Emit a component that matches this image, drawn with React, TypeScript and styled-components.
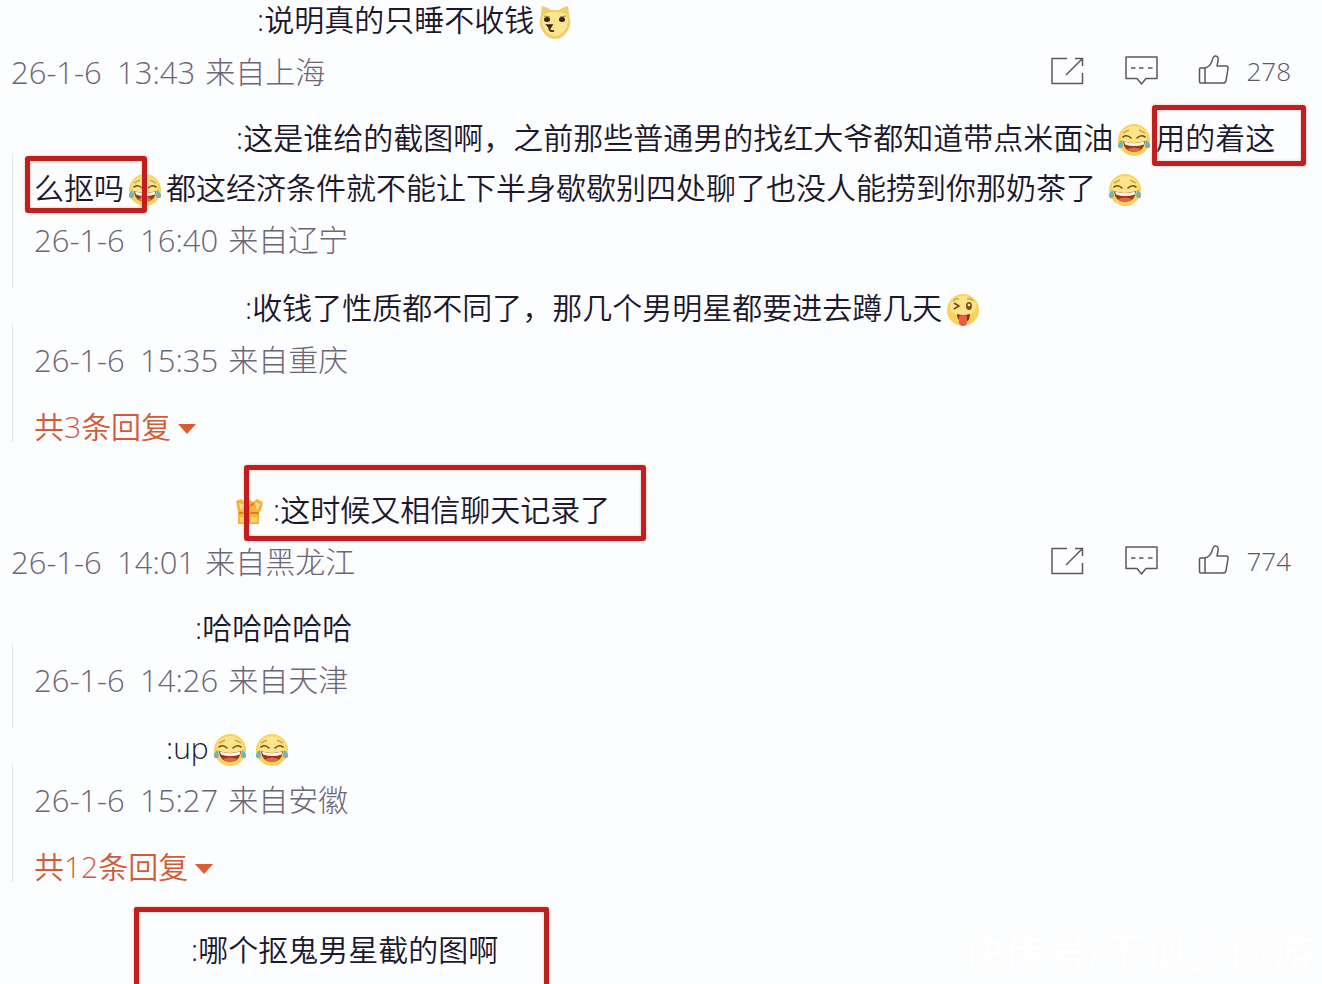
import React from 'react';
import styled, { createGlobalStyle } from 'styled-components';

const GlobalStyle = createGlobalStyle`
  * { box-sizing: border-box; }
  body { margin: 0; background: #fcfdff; }
`;

const Page = styled.main`
  position: relative;
  min-height: 100vh;
  padding-bottom: 14px;
  overflow: hidden;
  background: #fcfdff;
  color: #1c172b;
  font-family: 'Open Sans', 'Noto Sans CJK SC', sans-serif;
  font-size: 30px;
  font-weight: 300;
  line-height: 40px;
`;

const CommentList = styled.div`
  display: flex;
  flex-direction: column;
  gap: 42px;
`;

const Comment = styled.article`
  display: flex;
  flex-direction: column;
`;

const Body = styled.p`
  margin: -5px 0;
  font-weight: 350;
  line-height: 50px;
`;

const HiddenName = styled.span<{ $width: number }>`
  display: inline-block;
  width: ${(p) => p.$width}px;
`;

const Mark = styled.mark<{ $space: string; $open?: boolean }>`
  position: relative;
  display: inline-block;
  background: none;
  color: inherit;
  line-height: 40px;

  &::after {
    content: '';
    position: absolute;
    inset: ${(p) => p.$space};
    border: 5px solid #c01f1d;
    border-bottom-width: ${(p) => (p.$open ? 0 : 5)}px;
    border-radius: ${(p) => (p.$open ? '3px 3px 0 0' : '3px')};
    box-shadow: 0 0 3px #f3b5b2, inset 0 0 3px #f3b5b2;
    pointer-events: none;
  }
`;

const Meta = styled.div`
  display: flex;
  justify-content: space-between;
  align-items: center;
  margin-top: 12px;
  height: 40px;
  color: #6c6575;
`;

const Source = styled.div`
  display: flex;
  gap: 10px;
`;

const TimeText = styled.time`
  font-size: 31px;
`;

const DateText = styled(TimeText)`
  min-width: 96px;
`;

const CommentMeta = styled(Meta)`
  padding: 0 31px 0 11px;
`;

const Actions = styled.div`
  display: flex;
  align-items: center;
  gap: 40px;
  padding-bottom: 2px;
`;

const Action = styled.button`
  display: flex;
  align-items: center;
  gap: 16px;
  padding: 0;
  border: 0;
  background: none;
  color: #5c5566;
  font: inherit;
  font-size: 26px;
  line-height: 34px;
  cursor: pointer;

  svg { display: block; }
`;

const Replies = styled.section`
  margin: 26px 31px 0 12px;
`;

const Reply = styled.article`
  padding: 0 0 28px 22px;
  background: linear-gradient(transparent 36px, #dde3ee 48px) left / 1px 100% no-repeat;
`;

const MoreRow = styled.div`
  height: 40px;
  padding-left: 22px;
  background: linear-gradient(#dde3ee, #dde3ee) left top / 1px 34px no-repeat;
`;

const More = styled.button`
  display: flex;
  align-items: center;
  gap: 7px;
  padding: 0;
  border: 0;
  background: none;
  color: #d35a36;
  font: inherit;
  font-weight: 350;
  line-height: 38px;
  cursor: pointer;
`;

const Caret = styled.span`
  margin-top: 4px;
  border: 9px solid transparent;
  border-top: 10px solid #dc5c30;
  border-bottom: 0;
`;

const Watermark = styled.div`
  position: absolute;
  right: 8px;
  bottom: 0;
  color: #ffffff;
  font-size: 42px;
  font-weight: 400;
  line-height: 62px;
  white-space: nowrap;
`;

const Emoji = styled.svg`
  width: 34px;
  height: 34px;
  margin: 0 4px;
  vertical-align: -8px;
`;

const Face = () => (
  <>
    <circle cx="17" cy="17" r="16" fill="#f7d35d" />
    <ellipse cx="17" cy="13" rx="13" ry="10" fill="#fbe48a" />
  </>
);

const Joy = () => (
  <Emoji viewBox="0 0 34 34" role="img" aria-label="笑cry">
    <Face />
    <path d="M6 10l6-3M28 10l-6-3" stroke="#d9a53a" strokeWidth="1.5" fill="none" />
    <path d="M6 14q4-3 8 1M20 15q4-4 8-1" stroke="#7a4a1c" strokeWidth="1.6" fill="none" strokeLinecap="round" />
    <path d="M6 18q11 4 22 0q-1 11-11 11T6 18z" fill="#9c351c" />
    <path d="M7 18.500q10 3.500 20 0v3q-10 3-19 0z" fill="#fffaf0" />
    <path d="M10 26q7-3 14 0q-3 3-7 3t-7-3z" fill="#de6a43" />
    <path d="M5 17q-5 3-4 7q3 3 5-1z" fill="#6fb3bd" />
    <path d="M29 17q5 3 4 7q-3 3-5-1z" fill="#6fb3bd" />
  </Emoji>
);

const Doge = () => (
  <Emoji viewBox="0 0 34 34" role="img" aria-label="doge">
    <path d="M4 1q5 1 9 4h8q4-3 9-4q1 5 1 10q3 7-1 14q-5 9-13 9T4 25q-4-7-1-14Q3 6 4 1z" fill="#f1cd68" />
    <path d="M6 9q11-5 22 0q4 8 0 14q-4 8-11 8T6 23Q2 16 6 9z" fill="#fae691" />
    <path d="M6 11l6 1M28 11l-6 1" stroke="#a87c35" strokeWidth="1" />
    <ellipse cx="9" cy="14.500" rx="3" ry="2.500" fill="#34201a" />
    <ellipse cx="24" cy="14.500" rx="3" ry="2.500" fill="#34201a" />
    <path d="M9 20h5l-2 3z" fill="#34201a" stroke="#34201a" strokeWidth="1.500" />
    <path d="M11 22q0 5 5 4" stroke="#4c2a1d" strokeWidth="1.800" fill="none" />
  </Emoji>
);

const Wink = () => (
  <Emoji viewBox="0 0 34 34" role="img" aria-label="馋嘴">
    <Face />
    <path d="M8 10l5 3l-5 3" stroke="#70431d" strokeWidth="1.500" fill="none" />
    <ellipse cx="23" cy="13" rx="3" ry="4" fill="#80501f" />
    <circle cx="23" cy="12" r="1.300" fill="#fbe9b5" />
    <path d="M7 8q3-3 6-2M21 6q4-1 6 2" stroke="#d9a13a" strokeWidth="1.300" fill="none" />
    <path d="M11 21q6 2 13 0q0 7-5 8h-3q-5-2-5-8z" fill="#8e2b1c" />
    <path d="M13 23q4-2 8 0v7q-1 3-4 3t-4-3z" fill="#ef5a45" />
  </Emoji>
);

const Badge = () => (
  <Emoji viewBox="0 0 34 34" role="img" aria-label="粉丝徽章">
    <path d="M1 6l5-2l4 3l4-3l4 3l4-3l6 3l-2 9l-2 1v12H3V17z" fill="#f4b23f" />
    <path d="M4 8l5 2l-3 6zM20 7l5 2l-3 7z" fill="#fbdc8b" />
    <path d="M9 8q5 6 10 0M4 18h20M14 12v17" stroke="#dd7f1b" strokeWidth="2" fill="none" />
    <path d="M5 22h7v5H5zM16 22h6v5h-6z" fill="#fbd06e" />
  </Emoji>
);

const ShareIcon = () => (
  <svg width="34" height="34" viewBox="0 0 34 34" fill="none" stroke="currentColor" strokeWidth="1.5" aria-hidden="true">
    <path d="M17 4.500H2v25h30.500V19" strokeLinejoin="round" />
    <path d="M16 21L32 5M25 4.500h7.500V12" />
  </svg>
);

const ReplyIcon = () => (
  <svg width="34" height="34" viewBox="0 0 34 34" fill="none" stroke="currentColor" strokeWidth="1.5" aria-hidden="true">
    <path d="M2 3h31v21.500H22L17.500 30L13 24.500H2z" strokeLinejoin="round" />
    <path d="M7 14h4.500M15 14h4.500M24 14h4.500" />
  </svg>
);

const LikeIcon = () => (
  <svg width="32" height="34" viewBox="0 0 32 34" fill="none" stroke="currentColor" strokeWidth="1.500" strokeLinejoin="round" aria-hidden="true">
    <path d="M7 14H2.500Q1.500 14 1.500 15v12.500q0 1.500 1.500 1.500H7z" />
    <path d="M7 14q5-1 7-7q1-5 3.500-5q3.500 0 2.500 5l-1 5h9q2.500 0 2 3l-2 11.500q-.5 2.500-3 2.500H7" />
  </svg>
);

type StampProps = { time: string; place: string };

const Stamp = ({ time, place }: StampProps) => (
  <Source>
    <DateText>26-1-6</DateText>
    <TimeText>{time}</TimeText>
    <span>来自{place}</span>
  </Source>
);

const CommentFooter = ({ likes, ...stamp }: StampProps & { likes: number }) => (
  <CommentMeta>
    <Stamp {...stamp} />
    <Actions>
      <Action aria-label="转发"><ShareIcon /></Action>
      <Action aria-label="评论"><ReplyIcon /></Action>
      <Action><LikeIcon />{likes}</Action>
    </Actions>
  </CommentMeta>
);

const MoreReplies = ({ count }: { count: number }) => (
  <MoreRow>
    <More>共{count}条回复<Caret /></More>
  </MoreRow>
);

export default function App() {
  return (
    <Page>
      <GlobalStyle />
      <Watermark>快传号/不似少时游</Watermark>
      <CommentList>
        <Comment>
          <Body><HiddenName $width={257} />:说明真的只睡不收钱<Doge /></Body>
          <CommentFooter time="13:43" place="上海" likes={278} />
          <Replies>
            <Reply>
              <Body>
                <HiddenName $width={202} />:这是谁给的截图啊，之前那些普通男的找红大爷都知道带点米面油<Joy />
                <Mark $space="-13px -31px -8px -3px">用的着这</Mark>
                <Mark $space="-12px -23px -5px -9px">么抠吗</Mark>
                <Joy />都这经济条件就不能让下半身歇歇别四处聊了也没人能捞到你那奶茶了 <Joy />
              </Body>
              <Meta><Stamp time="16:40" place="辽宁" /></Meta>
            </Reply>
            <Reply>
              <Body><HiddenName $width={211} />:收钱了性质都不同了，那几个男明星都要进去蹲几天<Wink /></Body>
              <Meta><Stamp time="15:35" place="重庆" /></Meta>
            </Reply>
            <MoreReplies count={3} />
          </Replies>
        </Comment>
        <Comment>
          <Body>
            <HiddenName $width={231} /><Badge />
            <Mark $space="-25px -36px -11px -29px">:这时候又相信聊天记录了</Mark>
          </Body>
          <CommentFooter time="14:01" place="黑龙江" likes={774} />
          <Replies>
            <Reply>
              <Body><HiddenName $width={161} />:哈哈哈哈哈</Body>
              <Meta><Stamp time="14:26" place="天津" /></Meta>
            </Reply>
            <Reply>
              <Body><HiddenName $width={132} />:up<Joy /><Joy /></Body>
              <Meta><Stamp time="15:27" place="安徽" /></Meta>
            </Reply>
            <MoreReplies count={12} />
          </Replies>
        </Comment>
        <Comment>
          <Body>
            <HiddenName $width={191} />
            <Mark $space="-23px -51px -30px -57px" $open>:哪个抠鬼男星截的图啊</Mark>
          </Body>
        </Comment>
      </CommentList>
    </Page>
  );
}
